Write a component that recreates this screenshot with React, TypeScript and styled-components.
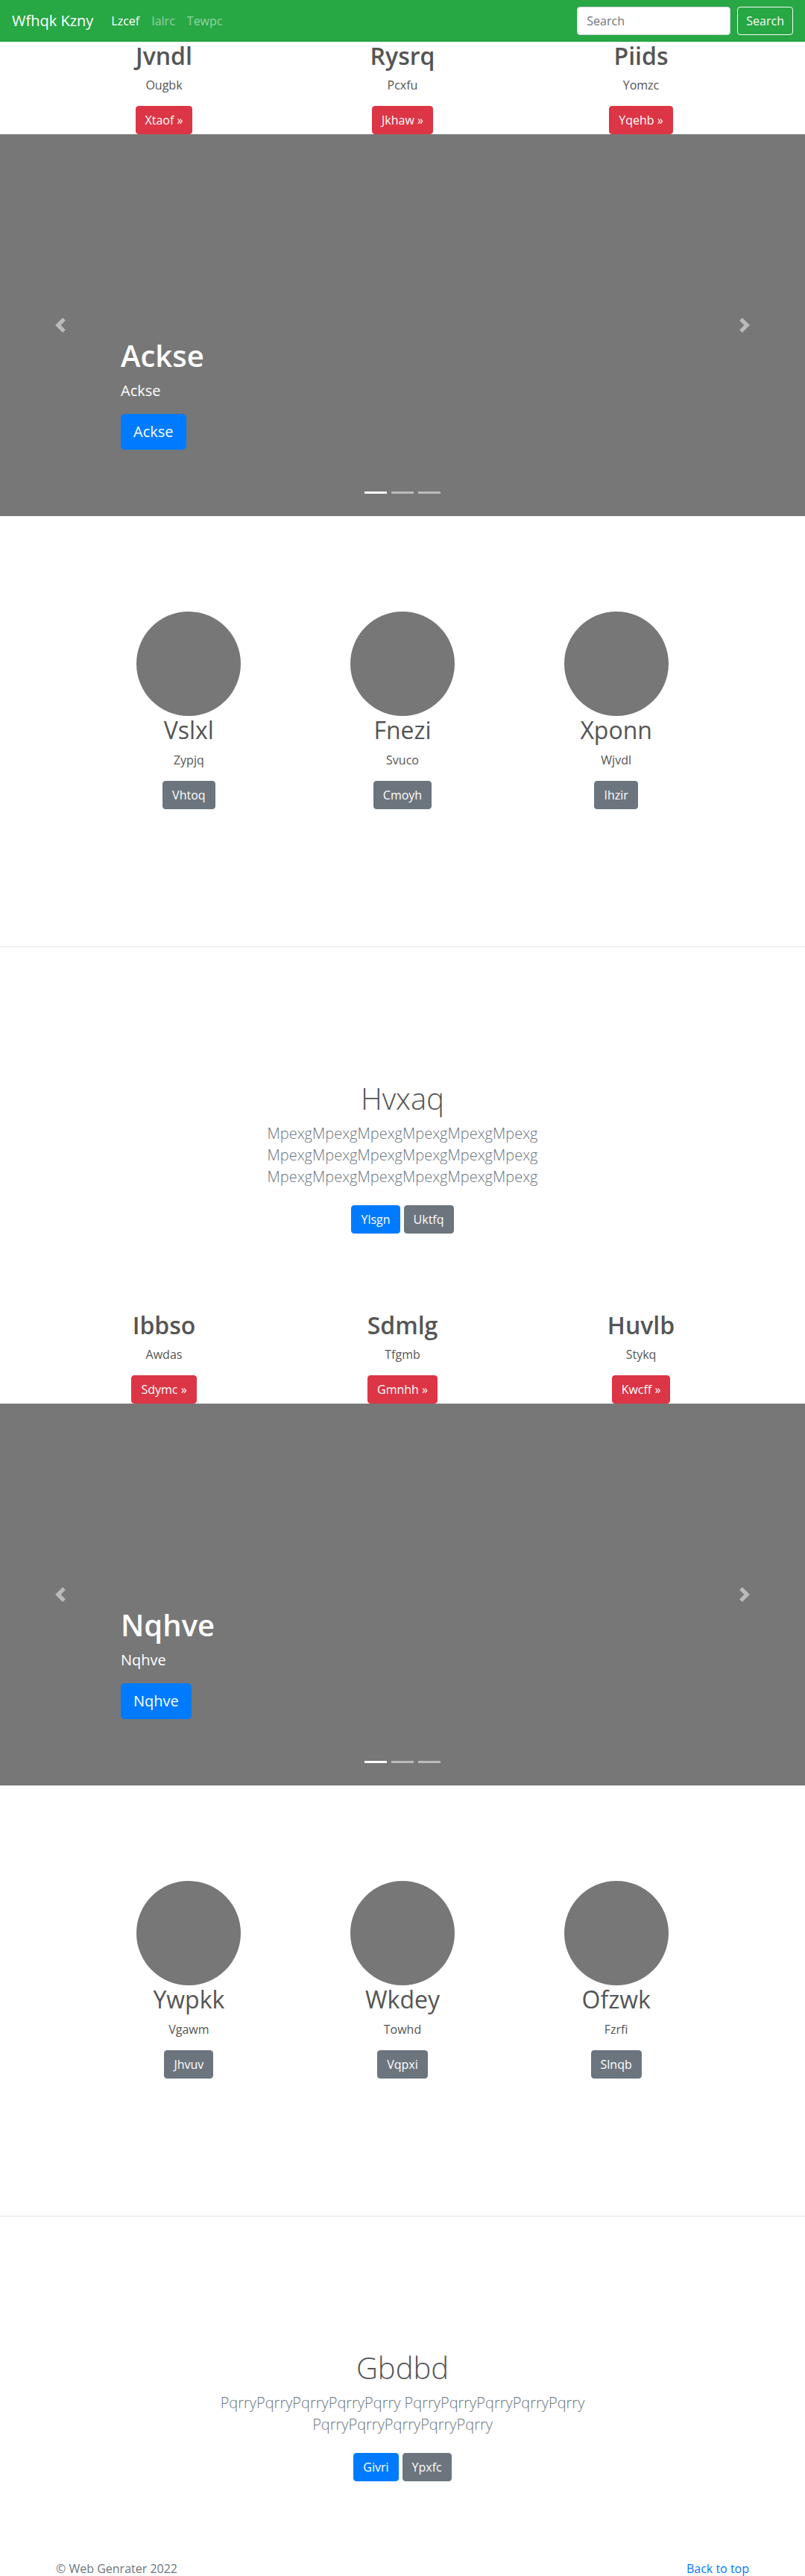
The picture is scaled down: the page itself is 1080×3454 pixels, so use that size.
import React from 'react';
import styled, { createGlobalStyle } from 'styled-components';

type Variant = 'primary' | 'secondary' | 'danger';

const palette: Record<Variant, string> = {
  primary: '#007bff',
  secondary: '#6c757d',
  danger: '#dc3545',
};

type Feature = { title: string; text: string; action: string };

type Group = {
  features: Feature[];
  slide: string;
  people: Feature[];
  heading: string;
  lead: string;
  actions: [string, string];
};

const groups: Group[] = [
  {
    features: [
      { title: 'Jvndl', text: 'Ougbk', action: 'Xtaof' },
      { title: 'Rysrq', text: 'Pcxfu', action: 'Jkhaw' },
      { title: 'Piids', text: 'Yomzc', action: 'Yqehb' },
    ],
    slide: 'Ackse',
    people: [
      { title: 'Vslxl', text: 'Zypjq', action: 'Vhtoq' },
      { title: 'Fnezi', text: 'Svuco', action: 'Cmoyh' },
      { title: 'Xponn', text: 'Wjvdl', action: 'Ihzir' },
    ],
    heading: 'Hvxaq',
    lead: Array(3).fill('Mpexg'.repeat(6)).join(' '),
    actions: ['Ylsgn', 'Uktfq'],
  },
  {
    features: [
      { title: 'Ibbso', text: 'Awdas', action: 'Sdymc' },
      { title: 'Sdmlg', text: 'Tfgmb', action: 'Gmnhh' },
      { title: 'Huvlb', text: 'Stykq', action: 'Kwcff' },
    ],
    slide: 'Nqhve',
    people: [
      { title: 'Ywpkk', text: 'Vgawm', action: 'Jhvuv' },
      { title: 'Wkdey', text: 'Towhd', action: 'Vqpxi' },
      { title: 'Ofzwk', text: 'Fzrfi', action: 'Slnqb' },
    ],
    heading: 'Gbdbd',
    lead: Array(3).fill('Pqrry'.repeat(5)).join(' '),
    actions: ['Givri', 'Ypxfc'],
  },
];

const GlobalStyle = createGlobalStyle`
  html, body {
    margin: 0;
    padding: 0;
  }

  body {
    font-family: 'Open Sans', 'Noto Sans', 'Liberation Sans', sans-serif;
    font-size: 16px;
    line-height: 1.5;
    color: #555;
    background: #fff;
  }

  *, *::before, *::after {
    box-sizing: border-box;
  }
`;

const Navbar = styled.nav`
  position: fixed;
  top: 0;
  left: 0;
  right: 0;
  z-index: 100;
  height: 56px;
  display: flex;
  align-items: center;
  padding: 0 16px;
  background: #28a745;
`;

const Brand = styled.a`
  margin-right: 16px;
  font-size: 20px;
  line-height: 30px;
  color: #fff;
  white-space: nowrap;
`;

const NavList = styled.div`
  display: flex;
`;

const NavLink = styled.a<{ $active?: boolean }>`
  padding: 0 8px;
  font-size: 16px;
  color: ${(p) => (p.$active ? '#fff' : 'rgba(255, 255, 255, 0.5)')};
`;

const SearchForm = styled.form`
  display: flex;
  align-items: center;
  gap: 9px;
  margin-left: auto;
`;

const SearchInput = styled.input`
  width: 206px;
  height: 38px;
  padding: 6px 12px;
  border: 1px solid #ced4da;
  border-radius: 4px;
  font: inherit;
  color: #495057;
  background: #fff;

  &::placeholder {
    color: #6c757d;
  }
`;

const OutlineButton = styled.button`
  height: 38px;
  padding: 6px 11px;
  border: 1px solid #f8f9fa;
  border-radius: 4px;
  background: transparent;
  color: #f8f9fa;
  font: inherit;
`;

const Button = styled.a<{ $variant: Variant; $large?: boolean }>`
  display: inline-block;
  padding: ${(p) => (p.$large ? '8px 16px' : '6px 12px')};
  border: 1px solid ${(p) => palette[p.$variant]};
  border-radius: ${(p) => (p.$large ? '5px' : '4px')};
  background: ${(p) => palette[p.$variant]};
  color: #fff;
  font-size: ${(p) => (p.$large ? '20px' : '16px')};
  line-height: ${(p) => (p.$large ? '30px' : '24px')};
  text-decoration: none;
  white-space: nowrap;
`;

const GroupSection = styled.section`
  padding-top: 56px;
`;

const FeatureRow = styled.div`
  display: grid;
  grid-template-columns: repeat(3, 1fr);
  max-width: 960px;
  margin: 0 auto;
`;

const FeatureCol = styled.div`
  padding: 0 15px;
  text-align: center;
`;

const FeatureTitle = styled.h2<{ $light?: boolean }>`
  margin: 0 0 8px;
  font-size: 32px;
  line-height: 1.2;
  font-weight: ${(p) => (p.$light ? 400 : 600)};
  color: #555;
`;

const FeatureText = styled.p`
  margin: 0 0 16px;
`;

const ActionLine = styled.p`
  margin: 0;
`;

const Carousel = styled.div`
  position: relative;
  height: 512px;
  background: #777;
  overflow: hidden;
`;

const Control = styled.a<{ $side: 'left' | 'right' }>`
  position: absolute;
  top: 0;
  bottom: 0;
  ${(p) => p.$side}: 0;
  width: 15%;
  display: flex;
  align-items: center;
  justify-content: center;
  opacity: 0.5;
`;

const Caption = styled.div`
  position: absolute;
  left: 15%;
  right: 15%;
  bottom: 89px;
  color: #fff;
  text-align: left;
`;

const CaptionTitle = styled.h1`
  margin: 0 0 8px;
  font-size: 40px;
  line-height: 1.2;
  font-weight: 600;
`;

const CaptionText = styled.p`
  margin: 0 0 16px;
  font-size: 20px;
  line-height: 30px;
`;

const Indicators = styled.ol`
  position: absolute;
  left: 0;
  right: 0;
  bottom: 30px;
  display: flex;
  justify-content: center;
  gap: 6px;
  margin: 0;
  padding: 0;
  list-style: none;
`;

const Indicator = styled.li<{ $active?: boolean }>`
  width: 30px;
  height: 3px;
  background: #fff;
  opacity: ${(p) => (p.$active ? 1 : 0.5)};
`;

const PeopleSection = styled.div`
  padding: 128px 0 184px;
`;

const PeopleRow = styled.div`
  display: grid;
  grid-template-columns: repeat(3, 1fr);
  max-width: 860px;
  margin: 0 auto;
`;

const Avatar = styled.div`
  width: 140px;
  height: 140px;
  margin: 0 auto;
  border-radius: 50%;
  background: #777;
`;

const Divider = styled.hr`
  height: 1px;
  margin: 0;
  border: 0;
  background: rgba(0, 0, 0, 0.1);
`;

const Jumbotron = styled.div`
  padding: 179px 0 40px;
  text-align: center;
`;

const JumboInner = styled.div`
  max-width: 640px;
  margin: 0 auto;
  padding: 0 15px;
`;

const JumboTitle = styled.h1`
  margin: 0 0 8px;
  font-size: 40px;
  line-height: 1.2;
  font-weight: 300;
  color: #555;
`;

const Lead = styled.p`
  margin: 0 0 16px;
  font-size: 20px;
  line-height: 29px;
  font-weight: 300;
  color: #6c757d;
`;

const JumboActions = styled.div`
  display: flex;
  justify-content: center;
  gap: 5px;
  padding: 8px 0;
`;

const Footer = styled.footer`
  padding: 57px 0 48px;
  color: #6c757d;
`;

const FooterInner = styled.div`
  display: flex;
  justify-content: space-between;
  max-width: 960px;
  margin: 0 auto;
  padding: 0 15px;
`;

const FooterLink = styled.a`
  color: #007bff;
  text-decoration: none;
`;

function Chevron({ dir }: { dir: 'prev' | 'next' }) {
  const d =
    dir === 'prev'
      ? 'M5.25 0l-4 4 4 4 1.5-1.5-2.5-2.5 2.5-2.5-1.5-1.5z'
      : 'M2.75 0l-1.5 1.5 2.5 2.5-2.5 2.5 1.5 1.5 4-4-4-4z';
  return (
    <svg width="20" height="20" viewBox="0 0 8 8" fill="#fff">
      <path d={d} />
    </svg>
  );
}

function Block({ group }: { group: Group }) {
  return (
    <GroupSection>
      <FeatureRow>
        {group.features.map((f) => (
          <FeatureCol key={f.title}>
            <FeatureTitle>{f.title}</FeatureTitle>
            <FeatureText>{f.text}</FeatureText>
            <ActionLine>
              <Button $variant="danger">{f.action} »</Button>
            </ActionLine>
          </FeatureCol>
        ))}
      </FeatureRow>

      <Carousel>
        <Caption>
          <CaptionTitle>{group.slide}</CaptionTitle>
          <CaptionText>{group.slide}</CaptionText>
          <ActionLine>
            <Button $variant="primary" $large>
              {group.slide}
            </Button>
          </ActionLine>
        </Caption>
        <Control $side="left">
          <Chevron dir="prev" />
        </Control>
        <Control $side="right">
          <Chevron dir="next" />
        </Control>
        <Indicators>
          <Indicator $active />
          <Indicator />
          <Indicator />
        </Indicators>
      </Carousel>

      <PeopleSection>
        <PeopleRow>
          {group.people.map((p) => (
            <FeatureCol key={p.title}>
              <Avatar />
              <FeatureTitle $light>{p.title}</FeatureTitle>
              <FeatureText>{p.text}</FeatureText>
              <ActionLine>
                <Button $variant="secondary">{p.action}</Button>
              </ActionLine>
            </FeatureCol>
          ))}
        </PeopleRow>
      </PeopleSection>

      <Divider />

      <Jumbotron>
        <JumboInner>
          <JumboTitle>{group.heading}</JumboTitle>
          <Lead>{group.lead}</Lead>
          <JumboActions>
            <Button $variant="primary">{group.actions[0]}</Button>
            <Button $variant="secondary">{group.actions[1]}</Button>
          </JumboActions>
        </JumboInner>
      </Jumbotron>
    </GroupSection>
  );
}

export default function App() {
  return (
    <>
      <GlobalStyle />
      <Navbar>
        <Brand>Wfhqk Kzny</Brand>
        <NavList>
          <NavLink $active>Lzcef</NavLink>
          <NavLink>Ialrc</NavLink>
          <NavLink>Tewpc</NavLink>
        </NavList>
        <SearchForm onSubmit={(e) => e.preventDefault()}>
          <SearchInput type="text" placeholder="Search" />
          <OutlineButton type="submit">Search</OutlineButton>
        </SearchForm>
      </Navbar>

      {groups.map((g) => (
        <Block key={g.heading} group={g} />
      ))}

      <Footer>
        <FooterInner>
          <span>© Web Genrater 2022</span>
          <FooterLink href="#">Back to top</FooterLink>
        </FooterInner>
      </Footer>
    </>
  );
}
